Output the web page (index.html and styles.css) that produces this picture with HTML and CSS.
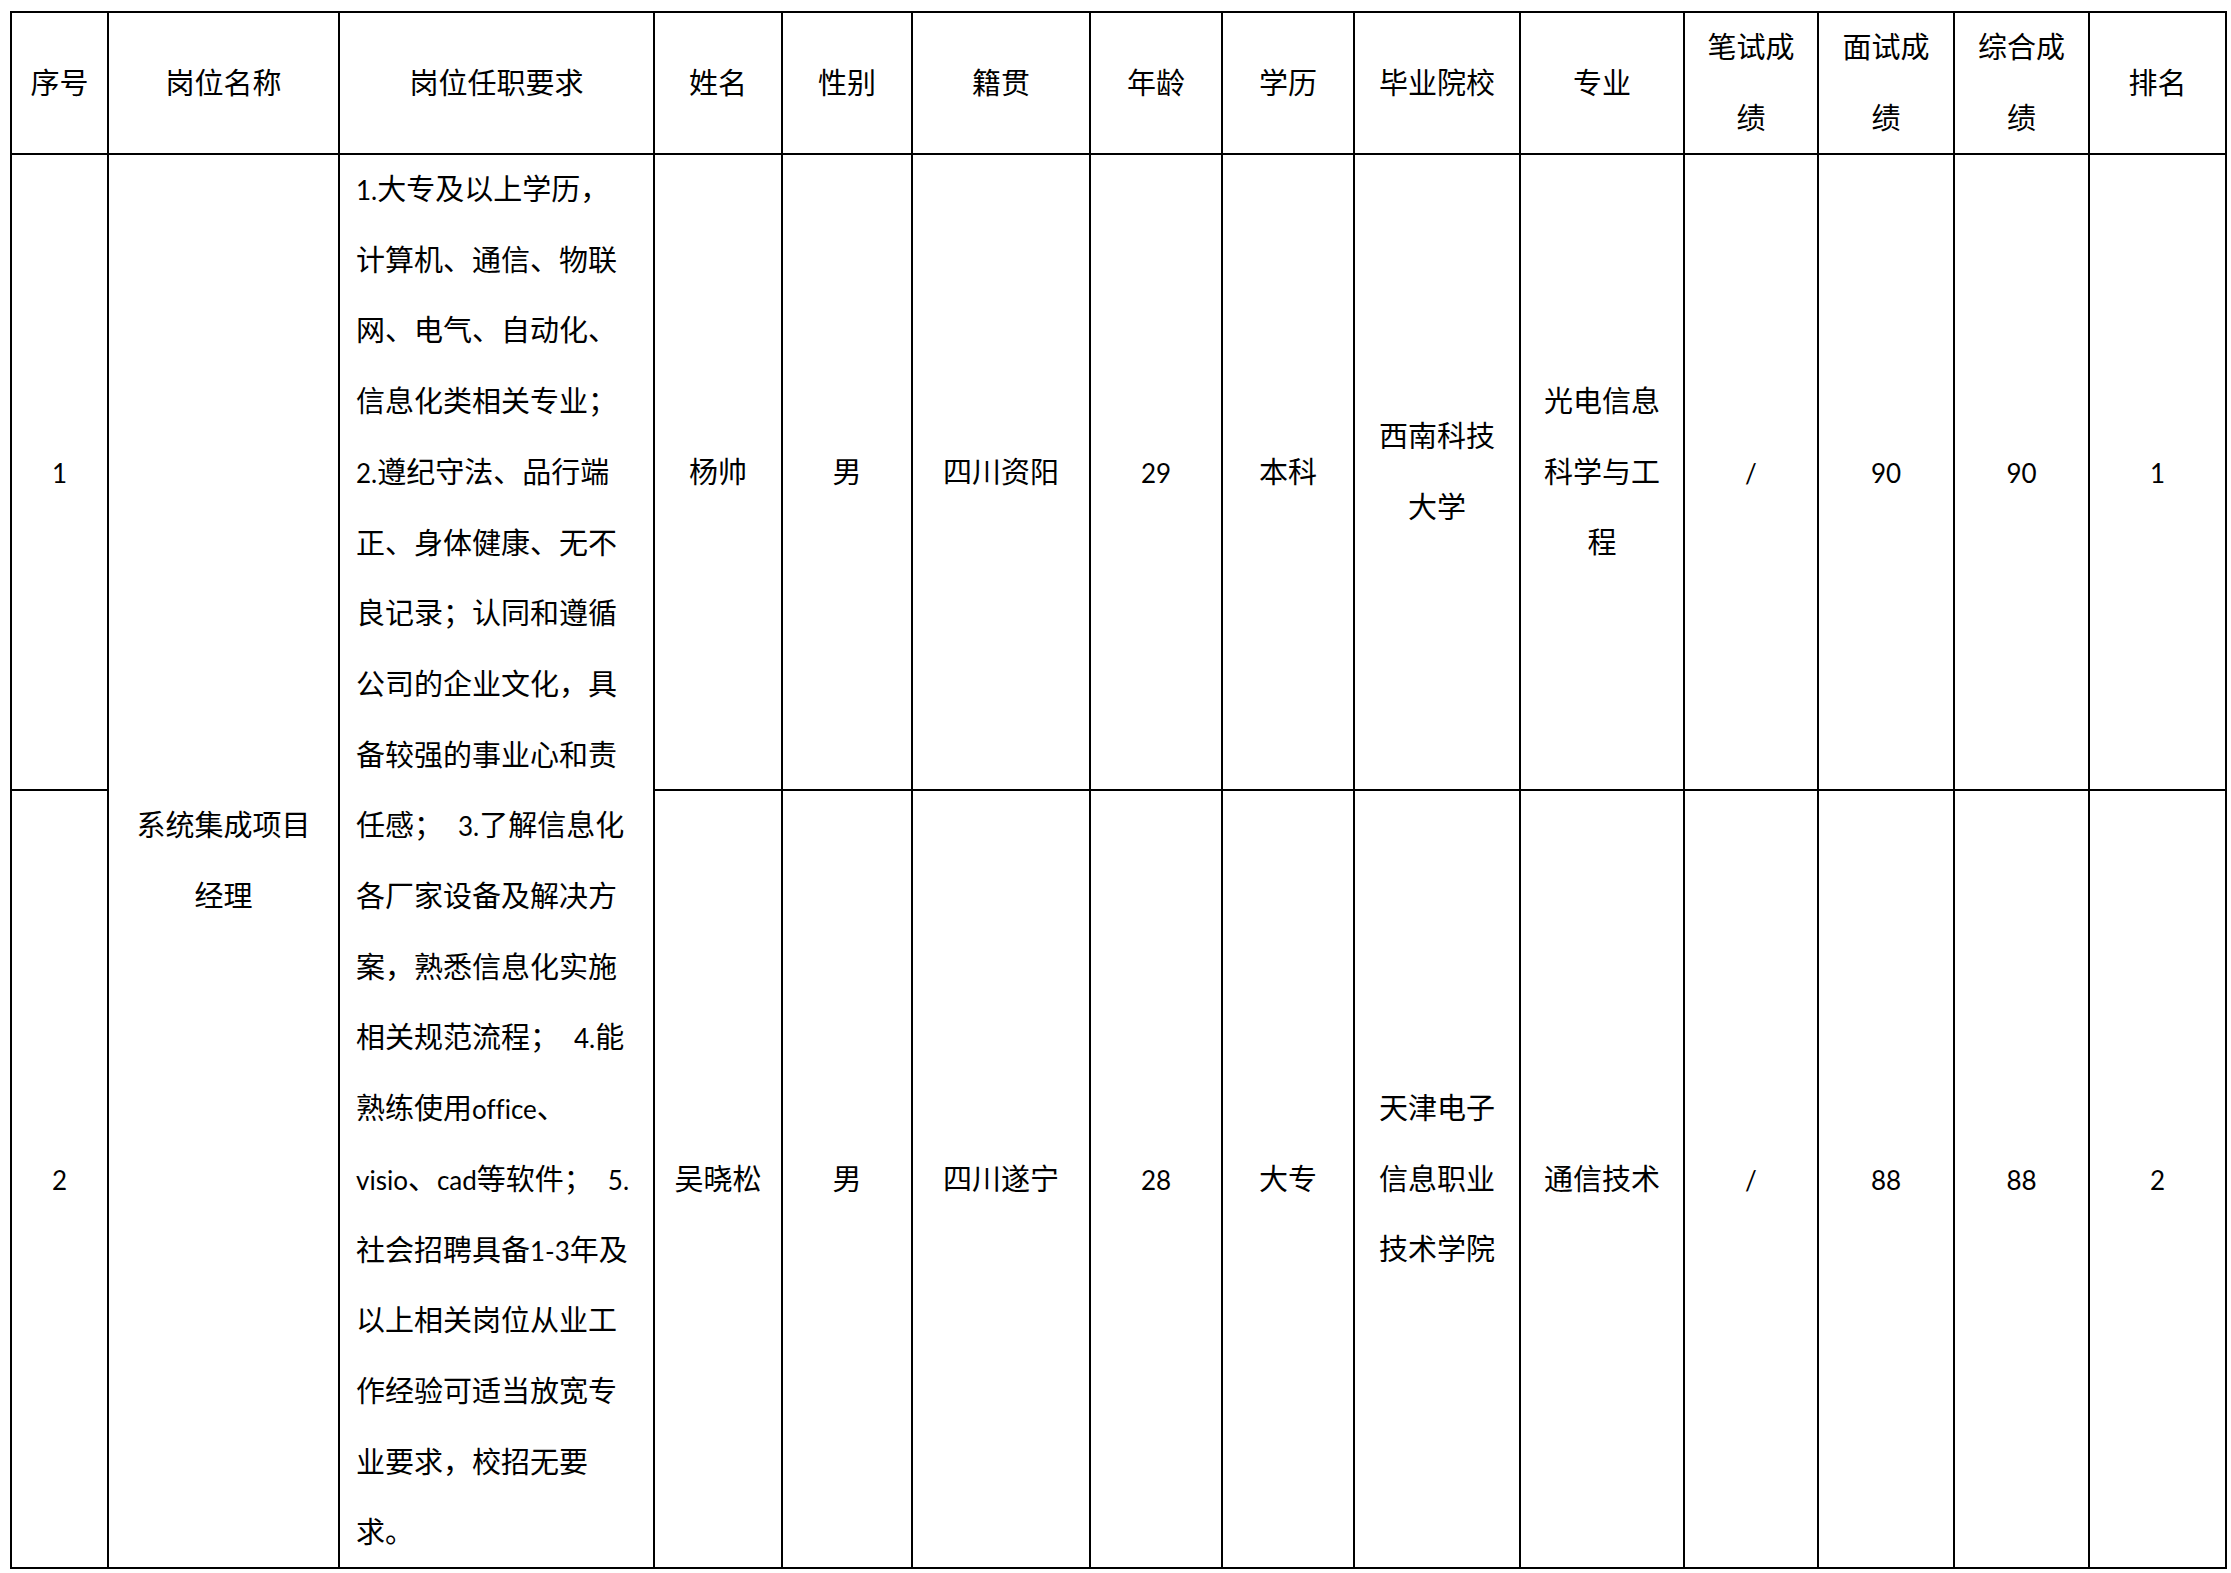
FILE: index.html
```html
<!DOCTYPE html>
<html lang="zh-CN">
<head>
<meta charset="utf-8">
<title>拟录用人员名单</title>
<link rel="stylesheet" href="styles.css">
</head>
<body>
<div class="sheet">
  <div class="cell"><div class="t">序号</div></div>
  <div class="cell"><div class="t">岗位名称</div></div>
  <div class="cell"><div class="t">岗位任职要求</div></div>
  <div class="cell"><div class="t">姓名</div></div>
  <div class="cell"><div class="t">性别</div></div>
  <div class="cell"><div class="t">籍贯</div></div>
  <div class="cell"><div class="t">年龄</div></div>
  <div class="cell"><div class="t">学历</div></div>
  <div class="cell"><div class="t">毕业院校</div></div>
  <div class="cell"><div class="t">专业</div></div>
  <div class="cell"><div class="t">笔试成<br>绩</div></div>
  <div class="cell"><div class="t">面试成<br>绩</div></div>
  <div class="cell"><div class="t">综合成<br>绩</div></div>
  <div class="cell"><div class="t">排名</div></div>

  <div class="cell"><div class="t"><span class="en">1</span></div></div>
  <div class="cell span2"><div class="t">系统集成项目<br>经理</div></div>
  <div class="cell span2 req"><div class="t">
    <span class="en">1.</span>大专及以上学历，<br>
    计算机、通信、物联<br>
    网、电气、自动化、<br>
    信息化类相关专业；<br>
    <span class="en">2.</span>遵纪守法、品行端<br>
    正、身体健康、无不<br>
    良记录；认同和遵循<br>
    公司的企业文化，具<br>
    备较强的事业心和责<br>
    任感；<span class="gap"></span><span class="en">3.</span>了解信息化<br>
    各厂家设备及解决方<br>
    案，熟悉信息化实施<br>
    相关规范流程；<span class="gap"></span><span class="en">4.</span>能<br>
    熟练使用<span class="en">office</span>、<br>
    <span class="en">visio</span>、<span class="en">cad</span>等软件；<span class="gap"></span><span class="en">5.</span><br>
    社会招聘具备<span class="en">1-3</span>年及<br>
    以上相关岗位从业工<br>
    作经验可适当放宽专<br>
    业要求，校招无要<br>
    求。
  </div></div>
  <div class="cell"><div class="t">杨帅</div></div>
  <div class="cell"><div class="t">男</div></div>
  <div class="cell"><div class="t">四川资阳</div></div>
  <div class="cell"><div class="t"><span class="en">29</span></div></div>
  <div class="cell"><div class="t">本科</div></div>
  <div class="cell"><div class="t">西南科技<br>大学</div></div>
  <div class="cell"><div class="t">光电信息<br>科学与工<br>程</div></div>
  <div class="cell"><div class="t"><span class="en">/</span></div></div>
  <div class="cell"><div class="t"><span class="en">90</span></div></div>
  <div class="cell"><div class="t"><span class="en">90</span></div></div>
  <div class="cell"><div class="t"><span class="en">1</span></div></div>

  <div class="cell"><div class="t"><span class="en">2</span></div></div>
  <div class="cell"><div class="t">吴晓松</div></div>
  <div class="cell"><div class="t">男</div></div>
  <div class="cell"><div class="t">四川遂宁</div></div>
  <div class="cell"><div class="t"><span class="en">28</span></div></div>
  <div class="cell"><div class="t">大专</div></div>
  <div class="cell"><div class="t">天津电子<br>信息职业<br>技术学院</div></div>
  <div class="cell"><div class="t">通信技术</div></div>
  <div class="cell"><div class="t"><span class="en">/</span></div></div>
  <div class="cell"><div class="t"><span class="en">88</span></div></div>
  <div class="cell"><div class="t"><span class="en">88</span></div></div>
  <div class="cell"><div class="t"><span class="en">2</span></div></div>
</div>
</body>
</html>
```

FILE: styles.css
```css
html, body {
  margin: 0;
  padding: 0;
  background: #ffffff;
}

body {
  color: #000000;
  font-family: "Noto Sans CJK SC", "Noto Sans CJK JP", sans-serif;
  font-size: 29px;
  font-weight: 400;
}

.sheet {
  display: grid;
  grid-template-columns: 97px 231px 315px 128px 130px 178px 132px 132px 166px 164px 134px 136px 135px 137px;
  grid-template-rows: 142px 636px 778px;
  width: max-content;
  margin: 11px 0 0 10px;
  border-top: 2px solid #000000;
  border-left: 2px solid #000000;
}

.cell {
  box-sizing: border-box;
  display: flex;
  align-items: center;
  justify-content: center;
  padding-bottom: 4px;
  border-right: 2px solid #000000;
  border-bottom: 2px solid #000000;
  line-height: 70.7px;
  text-align: center;
}

.t {
  white-space: nowrap;
}

.span2 {
  grid-row: span 2;
}

.req {
  align-items: flex-start;
  justify-content: flex-start;
  padding-bottom: 0;
  padding-left: 16px;
  text-align: left;
}

.req .t {
  margin-top: -3px;
}

.en {
  font-family: "Lato", "Liberation Sans", sans-serif;
  font-size: 26px;
  font-weight: 400;
  line-height: 1;
  font-variant-ligatures: none;
}

.gap {
  display: inline-block;
  width: 15px;
}
```
